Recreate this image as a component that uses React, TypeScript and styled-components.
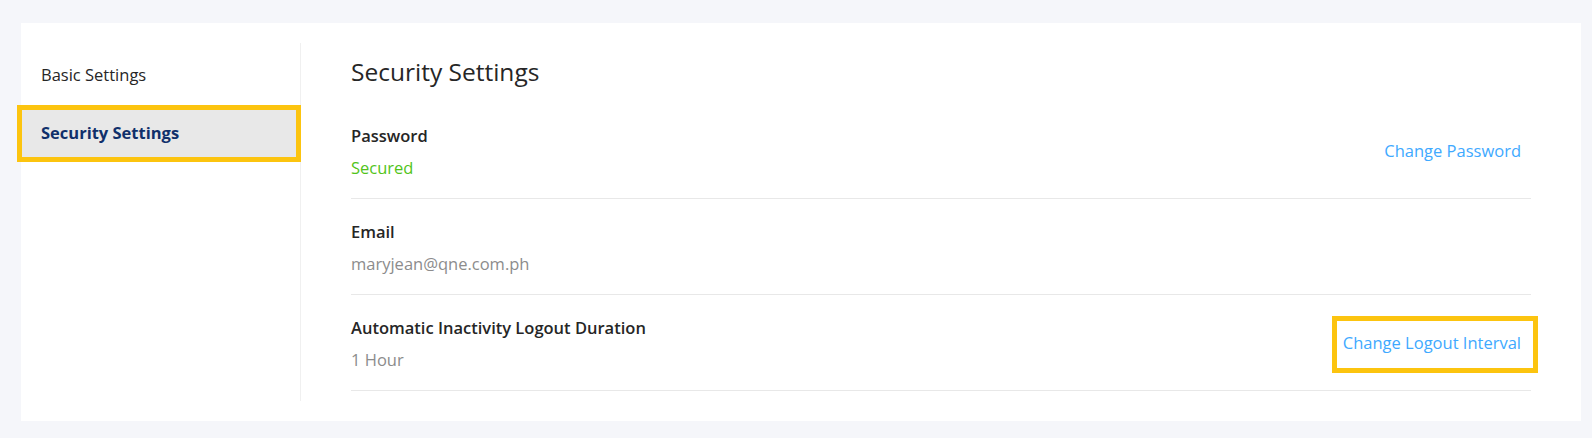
import styled, { createGlobalStyle } from "styled-components";

const GlobalStyle = createGlobalStyle`
    body {
        margin: 0;
        background: #f5f6fa;
        font-family: "Open Sans", "Noto Sans", sans-serif;
    }
`;

const Page = styled.div`
    padding: 23px 11px 17px 21px;
`;

const Card = styled.div`
    display: flex;
    background: #ffffff;
    padding: 20px 0;
`;

const Sidebar = styled.div`
    width: 279px;
    flex-shrink: 0;
    border-right: 1px solid #f0f0f0;
    padding-top: 8px;
    display: flex;
    flex-direction: column;
    gap: 10px;
    height: 350px;
`;

// yellow highlight frame drawn over an element
const Marked = styled.div<{ $t: number; $r: number; $b: number; $l: number }>`
    position: relative;
    &::after {
        content: "";
        position: absolute;
        top: ${(p) => p.$t}px;
        right: ${(p) => p.$r}px;
        bottom: ${(p) => p.$b}px;
        left: ${(p) => p.$l}px;
        border: 5px solid #fcc40f;
        pointer-events: none;
    }
`;

const MenuItem = styled.div<{ $active?: boolean }>`
    height: 48px;
    display: flex;
    align-items: center;
    padding-left: 20px;
    font-size: 16.5px;
    line-height: 24px;
    color: ${(p) => (p.$active ? "#10306b" : "#262626")};
    font-weight: ${(p) => (p.$active ? 700 : 400)};
    background: ${(p) => (p.$active ? "#e8e8e8" : "transparent")};
`;

const Main = styled.div`
    flex: 1;
    padding: 0 50px;
`;

const Title = styled.h2`
    margin: 13px 0 15px;
    font-size: 24.5px;
    line-height: 32px;
    font-weight: 500;
    color: #262626;
`;

const Row = styled.div`
    display: flex;
    align-items: center;
    justify-content: space-between;
    height: 95px;
    border-bottom: 1px solid #e8e8e8;
`;

const Info = styled.div`
    display: flex;
    flex-direction: column;
    gap: 8px;
    margin-top: 3px;
`;

const Label = styled.div`
    font-size: 16.5px;
    line-height: 24px;
    font-weight: 600;
    color: #262626;
`;

const Value = styled.div<{ $ok?: boolean }>`
    font-size: 16.5px;
    line-height: 24px;
    color: ${(p) => (p.$ok ? "#52c41a" : "#8c8c8c")};
`;

const Action = styled.a`
    display: block;
    padding: 0 10px;
    font-size: 16.5px;
    line-height: 24px;
    color: #40a9ff;
    cursor: pointer;
    text-decoration: none;
`;

function App() {
    return (
        <>
            <GlobalStyle />
            <Page>
                <Card>
                    <Sidebar>
                        <MenuItem>Basic Settings</MenuItem>
                        <Marked $t={-4} $r={-1} $b={-5} $l={-4}>
                            <MenuItem $active>Security Settings</MenuItem>
                        </Marked>
                    </Sidebar>
                    <Main>
                        <Title>Security Settings</Title>
                        <Row>
                            <Info>
                                <Label>Password</Label>
                                <Value $ok>Secured</Value>
                            </Info>
                            <Action>Change Password</Action>
                        </Row>
                        <Row>
                            <Info>
                                <Label>Email</Label>
                                <Value>maryjean@qne.com.ph</Value>
                            </Info>
                        </Row>
                        <Row>
                            <Info>
                                <Label>Automatic Inactivity Logout Duration</Label>
                                <Value>1 Hour</Value>
                            </Info>
                            <Marked $t={-15} $r={-7} $b={-18} $l={-1}>
                                <Action>Change Logout Interval</Action>
                            </Marked>
                        </Row>
                    </Main>
                </Card>
            </Page>
        </>
    );
}

export default App;
